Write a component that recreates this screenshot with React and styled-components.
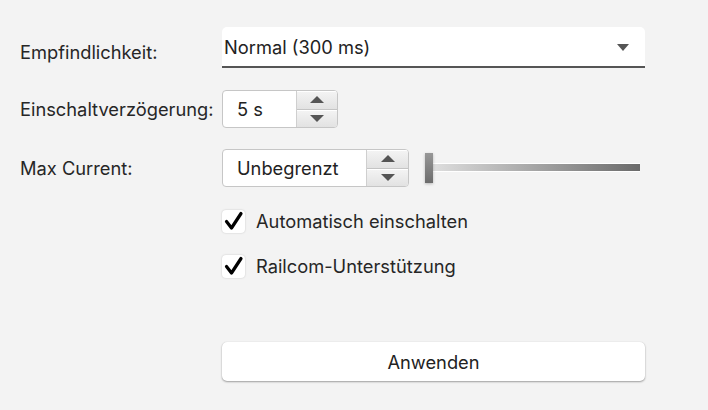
import React from "react";
import styled, { createGlobalStyle } from "styled-components";

const Global = createGlobalStyle`
  html, body { margin: 0; padding: 0; background: #f3f3f3; }
  body { font-family: Inter, "Liberation Sans", Arial, sans-serif; color: #222; }
`;

const Page = styled.div`
  width: 708px;
  height: 410px;
  box-sizing: border-box;
  padding: 27px 0 0 20px;
  display: flex;
  flex-direction: column;
`;

const Row = styled.div`
  display: flex;
  align-items: center;
  height: ${(p) => p.$h}px;
  margin-top: ${(p) => p.$mt || 0}px;
  padding-left: ${(p) => (p.$indent ? 202 : 0)}px;
`;

const Label = styled.div`
  width: 202px;
  flex: none;
  font-size: 18.3px;
  font-weight: 400;
  color: #262626;
  padding-top: ${(p) => p.$pt || 0}px;
  white-space: nowrap;
`;

const Combo = styled.div`
  width: 405px;
  height: 39px;
  background: #fff;
  border-radius: 5px 5px 0 0;
  border-bottom: 2px solid #555;
  display: flex;
  align-items: center;
  justify-content: space-between;
  padding: 0 16px 0 2px;
  font-size: 18.3px;
  color: #222;
`;

const Caret = styled.div`
  width: 0;
  height: 0;
  border-left: 6px solid transparent;
  border-right: 6px solid transparent;
  border-top: 7px solid #555;
  margin-top: 1px;
`;

const Spinner = styled.div`
  width: ${(p) => p.$w}px;
  height: 38px;
  box-sizing: border-box;
  border: 1px solid #c6c6c6;
  border-radius: 4px;
  display: flex;
  overflow: hidden;
  background: #fff;
  flex: none;
`;

const SpinField = styled.div`
  flex: 1;
  display: flex;
  align-items: center;
  padding-left: 14px;
  font-size: 18.3px;
  color: #222;
  border-right: 1px solid #cfcfcf;
`;

const SpinButtons = styled.div`
  width: ${(p) => p.$w}px;
  display: flex;
  flex-direction: column;
`;

const SpinBtn = styled.div`
  flex: 1;
  display: flex;
  align-items: center;
  justify-content: center;
  background: linear-gradient(#f4f4f4, #e2e2e2);
  box-shadow: inset 0 1px 0 #fff;
  & + & { border-top: 1px solid #c4c4c4; }
`;

const Tri = styled.div`
  width: 0;
  height: 0;
  border-left: 7px solid transparent;
  border-right: 7px solid transparent;
  ${(p) => (p.$up ? "border-bottom: 7px solid #555;" : "border-top: 7px solid #555;")}
`;

const Slider = styled.div`
  margin-left: 16px;
  position: relative;
  width: 215px;
  height: 30px;
`;

const Track = styled.div`
  position: absolute;
  left: 8px;
  right: 0;
  height: 9px;
  top: 10px;
  background: linear-gradient(90deg, #dedede, #6a6a6a);
  border-top: 1px solid #fff;
  border-bottom: 1px solid #fff;
  box-sizing: border-box;
`;

const Thumb = styled.div`
  position: absolute;
  left: 0;
  top: 0;
  width: 8px;
  height: 30px;
  background: linear-gradient(#979797, #6c6c6c);
  box-shadow: 0 1px 3px rgba(0, 0, 0, 0.25);
`;

const CheckRow = styled.label`
  display: flex;
  align-items: center;
  gap: 11px;
  font-size: 18.3px;
  color: #262626;
`;

const Box = styled.div`
  width: 23px;
  height: 23px;
  background: #fff;
  border-radius: 4px;
  box-shadow: 0 0 2px rgba(0, 0, 0, 0.2);
  display: flex;
  align-items: center;
  justify-content: center;
`;

const Button = styled.button`
  width: 423px;
  height: 39px;
  background: #fff;
  border: none;
  border-radius: 5px;
  box-shadow: 0 1px 2px rgba(0, 0, 0, 0.35), 0 0 1px rgba(0, 0, 0, 0.15);
  font-family: inherit;
  font-size: 18.3px;
  color: #222;
  padding: 0;
`;

const Check = () => (
  <svg width="20" height="20" viewBox="0 0 20 20">
    <path d="M2.5 10.5 L7.5 17 L17 2.5" fill="none" stroke="#000" strokeWidth="3.2" strokeLinecap="round" strokeLinejoin="round" />
  </svg>
);

const Spin = ({ w, bw, value }) => (
  <Spinner $w={w}>
    <SpinField>{value}</SpinField>
    <SpinButtons $w={bw}>
      <SpinBtn><Tri $up /></SpinBtn>
      <SpinBtn><Tri /></SpinBtn>
    </SpinButtons>
  </Spinner>
);

export default function App() {
  return (
    <>
      <Global />
      <Page>
        <Row $h={41}>
          <Label $pt={8}>Empfindlichkeit:</Label>
          <Combo>
            <span>Normal (300 ms)</span>
            <Caret />
          </Combo>
        </Row>

        <Row $h={38} $mt={22}>
          <Label>Einschaltverzögerung:</Label>
          <Spin w={116} bw={40} value="5 s" />
        </Row>

        <Row $h={38} $mt={21}>
          <Label>Max Current:</Label>
          <Spin w={187} bw={41} value="Unbegrenzt" />
          <Slider>
            <Track />
            <Thumb />
          </Slider>
        </Row>

        <Row $h={24} $mt={22} $indent>
          <CheckRow><Box><Check /></Box>Automatisch einschalten</CheckRow>
        </Row>
        <Row $h={24} $mt={21} $indent>
          <CheckRow><Box><Check /></Box>Railcom-Unterstützung</CheckRow>
        </Row>

        <Row $h={39} $mt={64} $indent>
          <Button>Anwenden</Button>
        </Row>
      </Page>
    </>
  );
}
